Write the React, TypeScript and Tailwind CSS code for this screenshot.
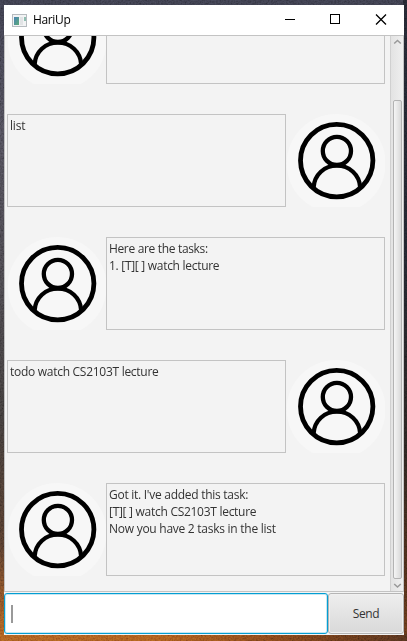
import React from "react";

function Avatar() {
  return (
    <svg className="block h-[93px] w-[99px] shrink-0" viewBox="0 0 99 93" fill="none">
      <circle cx="50.2" cy="49.5" r="49.5" fill="#f7f7f7" />
      <g stroke="#000">
        <circle cx="50.7" cy="46.6" r="36.2" strokeWidth="4.8" />
        <circle cx="50.9" cy="36.9" r="14.1" strokeWidth="4.3" />
        <path d="M27.6 73.5C28.3 60.5 38.5 51.7 50.9 51.7S73.5 60.5 74.2 73.5" strokeWidth="4.3" />
      </g>
    </svg>
  );
}

type Line = { text: string; spacing: string };

function Message({ lines, fromUser }: { lines: Line[]; fromUser?: boolean }) {
  return (
    <div className={`flex h-[93px] shrink-0 ${fromUser ? "" : "flex-row-reverse justify-end"}`}>
      <div className="w-[279px] shrink-0 border border-[#c3c3c3] pl-[2px] pt-[2px] text-[12px] leading-[17px] text-[#333]">
        {lines.map((l) => (
          <div key={l.text} className={`whitespace-pre ${l.spacing}`}>{l.text}</div>
        ))}
      </div>
      <Avatar />
    </div>
  );
}

export default function App() {
  return (
    <div className="relative h-[641px] w-[407px] overflow-hidden bg-[linear-gradient(180deg,#393a48_0%,#4a4853_20%,#454247_45%,#3c3837_65%,#50382a_85%,#9b5722_97%,#a85a1e_100%)] font-['Open_Sans','Noto_Sans',sans-serif]">
      <div className="absolute right-0 top-0 h-full w-[4px] bg-[linear-gradient(180deg,#23252f_0%,#20222b_40%,#29221f_70%,#4b2b18_90%,#65381a_100%)]" />
      <div className="absolute bottom-0 left-0 h-[7px] w-full bg-[linear-gradient(90deg,#a85b20_0%,#a6571c_40%,#713c18_75%,#50301c_100%)]" />
      <svg className="absolute inset-0 h-full w-full opacity-40 mix-blend-overlay">
        <filter id="grain"><feTurbulence type="fractalNoise" baseFrequency="0.6" numOctaves="2" /><feColorMatrix type="matrix" values="1 0 0 0 -0.08  1 0 0 0 -0.08  1 0 0 0 -0.08  0 0 0 0 1" /></filter>
        <rect width="407" height="641" filter="url(#grain)" />
      </svg>
      <div className="relative ml-[4px] flex h-[641px] w-[400px] flex-col pb-[6px] pt-[5px]">
        <header className="flex h-[30px] shrink-0 items-center bg-white pl-[8px]">
          <svg className="h-[13px] w-[15px]" viewBox="0 0 15 13">
            <defs><linearGradient id="pane" x2="1" y2="1"><stop stopColor="#4a83b5" /><stop offset="1" stopColor="#5cab78" /></linearGradient></defs>
            <rect x=".5" y=".5" width="14" height="12" fill="#f2f3f4" stroke="#b6bbbf" />
            <path d="M2 3h5v8H2z" fill="url(#pane)" />
            <path d="M8 3h3v8H8z" fill="#e1e3e5" />
            <path d="M12 3h2v4h-2z" fill="#8fbdb0" />
          </svg>
          <span className="ml-[6px] text-[12px] leading-[16px] tracking-[-0.35px] text-black">HariUp</span>
          <svg className="ml-auto h-[30px] w-[138px]" viewBox="0 0 138 30" fill="none" stroke="#000" shapeRendering="crispEdges">
            <path d="M19 14.5h10M64.5 9.5h9v9h-9z" />
            <path d="M110 9.5l10 10M120 9.5l-10 10" shapeRendering="auto" strokeWidth="1.3" />
          </svg>
        </header>
        <div className="flex h-[557px] shrink-0 overflow-hidden border-y border-l border-[#c3c3c3] bg-[#f3f3f3]">
          <main className="flex h-[555px] w-[385px] shrink-0 flex-col overflow-hidden pl-[2px]">
            <div className="-mt-[45px] flex flex-col gap-[30px]">
              <Message lines={[]} />
              <Message fromUser lines={[{ text: "list", spacing: "tracking-[-0.2px]" }]} />
              <Message lines={[{ text: "Here are the tasks:", spacing: "tracking-[-0.37px] [word-spacing:0.2px]" }, { text: "1. [T][ ] watch lecture", spacing: "tracking-[-0.29px]" }]} />
              <Message fromUser lines={[{ text: "todo watch CS2103T lecture", spacing: "tracking-[-0.28px]" }]} />
              <Message lines={[{ text: "Got it. I've added this task:", spacing: "tracking-[-0.27px]" }, { text: "[T][ ] watch CS2103T lecture", spacing: "tracking-[-0.28px]" }, { text: "Now you have 2 tasks in the list", spacing: "tracking-[-0.26px]" }]} />
            </div>
          </main>
          <aside className="flex w-[13px] shrink-0 flex-col items-center border-l border-[#d0d0d0] bg-[linear-gradient(90deg,#e3e3e3,#efefef)]">
            <svg className="h-[64px] w-[9px]" viewBox="0 0 9 64" fill="none" stroke="#999" strokeWidth="1.5"><path d="M1.2 7.5L4.5 4.5L7.8 7.5" /></svg>
            <div className="h-[479px] w-[9px] rounded-[2px] border border-[#b3b3b3] bg-[linear-gradient(90deg,#f5f5f5,#d9d9d9)]" />
            <svg className="h-[12px] w-[9px]" viewBox="0 0 9 12" fill="none" stroke="#999" strokeWidth="1.5"><path d="M1.2 5L4.5 8L7.8 5" /></svg>
          </aside>
          <div className="w-px bg-[#c3c3c3]" />
        </div>
        <footer className="flex h-[43px] shrink-0 bg-[#f3f3f3] pb-px pt-px">
          <div className="flex w-[324px] items-center rounded-[3px] border border-[#039ed3] bg-white pl-[6px] shadow-[inset_0_0_0_1px_#c7e7f2]">
            <div className="h-[18px] w-[2px] bg-[#999]" />
          </div>
          <button className="flex w-[76px] items-center justify-center rounded-[3px] border border-[#b5b5b5] bg-[linear-gradient(180deg,#eeeeee,#d9d9d9)] text-[12px] tracking-[-0.4px] text-[#333] shadow-[inset_0_0_0_1px_#f0f0f0]">Send</button>
        </footer>
      </div>
    </div>
  );
}
